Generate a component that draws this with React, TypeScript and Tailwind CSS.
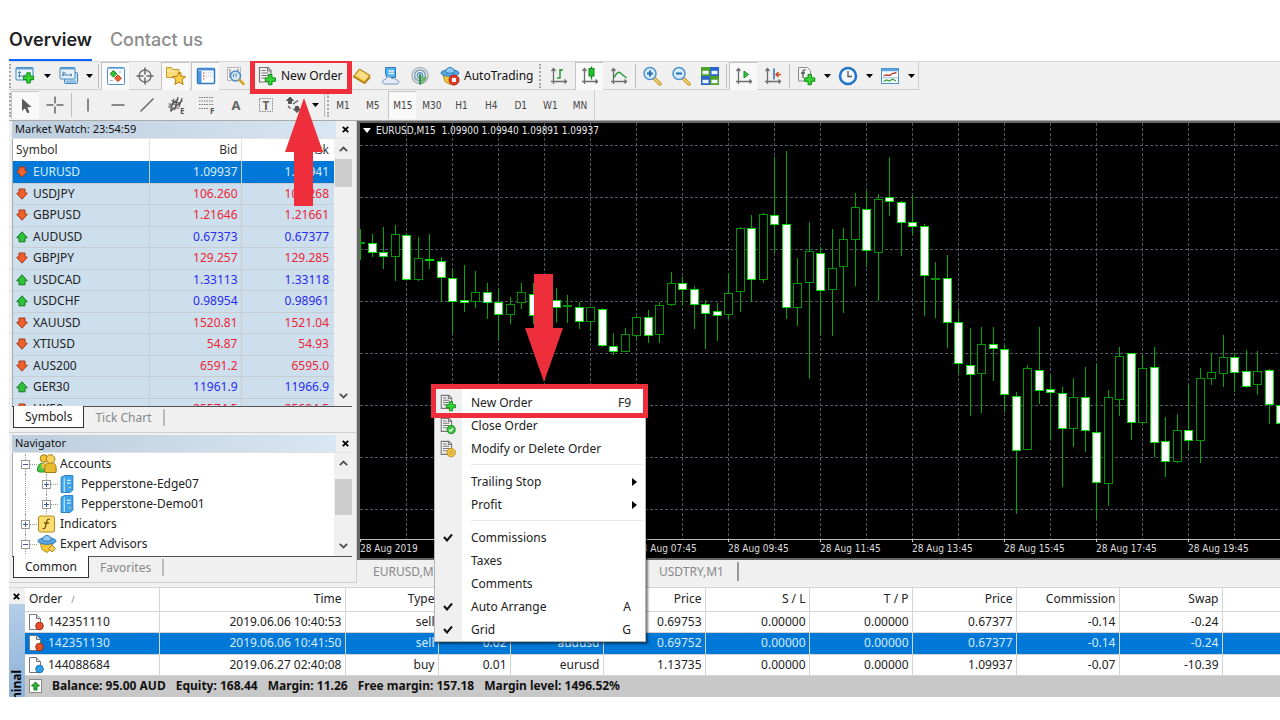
import { useState } from 'react';
import type { ReactNode } from 'react';
import clsx from 'clsx';

const UI = 'font-["Noto_Sans","Open_Sans",sans-serif]';
const TAHOMA = 'font-["DejaVu_Sans_Condensed","Noto_Sans",sans-serif]';

interface Quote {
  symbol: string;
  bid: string;
  ask: string;
  up: boolean;
}

const quotes: Quote[] = [
  { symbol: 'EURUSD', bid: '1.09937', ask: '1.09941', up: false },
  { symbol: 'USDJPY', bid: '106.260', ask: '106.268', up: false },
  { symbol: 'GBPUSD', bid: '1.21646', ask: '1.21661', up: false },
  { symbol: 'AUDUSD', bid: '0.67373', ask: '0.67377', up: true },
  { symbol: 'GBPJPY', bid: '129.257', ask: '129.285', up: false },
  { symbol: 'USDCAD', bid: '1.33113', ask: '1.33118', up: true },
  { symbol: 'USDCHF', bid: '0.98954', ask: '0.98961', up: true },
  { symbol: 'XAUUSD', bid: '1520.81', ask: '1521.04', up: false },
  { symbol: 'XTIUSD', bid: '54.87', ask: '54.93', up: false },
  { symbol: 'AUS200', bid: '6591.2', ask: '6595.0', up: false },
  { symbol: 'GER30', bid: '11961.9', ask: '11966.9', up: true },
  { symbol: 'HK50', bid: '25574.5', ask: '25604.5', up: false },
];

const orders = [
  { id: '142351110', time: '2019.06.06 10:40:53', type: 'sell', size: '', symbol: '', open: '0.69753', price: '0.67377', commission: '-0.14', swap: '-0.24' },
  { id: '142351130', time: '2019.06.06 10:41:50', type: 'sell', size: '0.02', symbol: 'audusd', open: '0.69752', price: '0.67377', commission: '-0.14', swap: '-0.24' },
  { id: '144088684', time: '2019.06.27 02:40:08', type: 'buy', size: '0.01', symbol: 'eurusd', open: '1.13735', price: '1.09937', commission: '-0.07', swap: '-10.39' },
];

const account = ['Balance: 95.00 AUD', 'Equity: 168.44', 'Margin: 11.26', 'Free margin: 157.18', 'Margin level: 1496.52%'];

// high, body top, body bottom, low, filled (1 = bearish)
const candles: number[][] = [
  [229, 242, 243, 260, 0], [234, 243, 253, 257, 1], [227, 252, 257, 269, 1], [225, 234, 257, 281, 0],
  [234, 235, 280, 280, 1], [237, 258, 280, 281, 0], [234, 259, 261, 269, 1], [257, 261, 278, 302, 1],
  [269, 278, 302, 333, 1], [265, 300, 303, 312, 1], [271, 292, 302, 308, 0], [283, 292, 303, 319, 1],
  [289, 302, 315, 340, 1], [297, 304, 315, 324, 0], [283, 292, 303, 309, 0], [283, 294, 316, 324, 1],
  [290, 300, 316, 322, 0], [288, 300, 308, 323, 1], [295, 305, 307, 323, 0], [302, 307, 322, 329, 1],
  [307, 307, 322, 331, 0], [308, 309, 346, 347, 1], [333, 346, 352, 355, 1], [328, 334, 352, 352, 0],
  [316, 317, 336, 339, 0], [310, 317, 336, 343, 1], [302, 305, 335, 343, 0], [272, 283, 305, 306, 0],
  [277, 283, 290, 306, 1], [286, 289, 305, 329, 1], [300, 304, 314, 349, 1], [303, 311, 316, 341, 1],
  [273, 293, 315, 319, 0], [227, 228, 292, 312, 0], [215, 228, 280, 302, 1], [213, 214, 280, 283, 0],
  [157, 215, 225, 253, 1], [151, 224, 308, 319, 1], [258, 283, 308, 326, 0], [222, 251, 283, 379, 0],
  [247, 253, 291, 335, 1], [229, 268, 290, 336, 0], [228, 239, 267, 313, 0], [193, 207, 240, 286, 0],
  [191, 209, 251, 267, 1], [194, 199, 253, 301, 0], [157, 197, 202, 216, 1], [201, 202, 223, 256, 1],
  [196, 222, 227, 235, 1], [224, 226, 276, 316, 1], [262, 278, 279, 318, 0], [255, 278, 323, 348, 1],
  [311, 322, 364, 374, 1], [328, 365, 375, 416, 1], [327, 344, 374, 413, 0], [327, 344, 349, 381, 1],
  [345, 349, 395, 412, 1], [392, 396, 451, 514, 1], [365, 368, 450, 450, 0], [327, 370, 391, 404, 1],
  [375, 389, 393, 440, 1], [387, 393, 429, 487, 1], [378, 397, 429, 447, 0], [367, 397, 431, 452, 1],
  [364, 432, 483, 519, 1], [390, 397, 484, 506, 0], [347, 356, 400, 416, 0], [353, 353, 423, 440, 1],
  [355, 368, 423, 424, 0], [347, 367, 443, 457, 1], [417, 441, 462, 477, 1], [414, 430, 462, 463, 0],
  [385, 430, 441, 451, 1], [368, 378, 441, 463, 0], [353, 372, 379, 385, 0], [335, 357, 374, 387, 0],
  [353, 357, 373, 392, 1], [350, 371, 387, 388, 1], [351, 371, 385, 395, 0], [369, 370, 405, 424, 1],
  [405, 405, 424, 457, 1],
];

const timeLabels = [
  '28 Aug 2019', '28 Aug 03:45', '28 Aug 05:45', '28 Aug 07:45', '28 Aug 09:45', '28 Aug 11:45',
  '28 Aug 13:45', '28 Aug 15:45', '28 Aug 17:45', '28 Aug 19:45', '28 Aug 21:45',
];

const timeframes = ['M1', 'M5', 'M15', 'M30', 'H1', 'H4', 'D1', 'W1', 'MN'];

/* ---------- icons ---------- */

function Svg({ children, size = 20 }: { children: ReactNode; size?: number }) {
  return (
    <svg width={size} height={size} viewBox="0 0 20 20" fill="none" className="shrink-0" aria-hidden="true">
      {children}
    </svg>
  );
}

const Plus = ({ x, y }: { x: number; y: number }) => (
  <path d={`M${x} ${y}h3.4v3.4h3.4v3.4h-3.4v3.4h-3.4v-3.4h-3.4v-3.4h3.4z`} fill="#35d435" stroke="#0b8a14" strokeWidth="1" />
);

const Sheet = () => (
  <>
    <path d="M2.500 1.500h8.500l3 3v11.500h-11.500z" fill="#f2f2f2" stroke="#777" strokeWidth="1.200" />
    <path d="M10.500 1.500v3.500h3.500" stroke="#777" strokeWidth="1.200" />
    <path d="M4.500 4.500h4M4.500 7h7M4.500 9.500h7M4.500 12h4" stroke="#777" strokeWidth="1.200" />
  </>
);

const NewChartIcon = () => (
  <Svg>
    <rect x="1" y="1.500" width="17" height="12.500" rx="1" fill="#eaf4fd" stroke="#3f83bd" />
    <path d="M1 2.500h17" stroke="#5d9fd6" strokeWidth="2" />
    <path d="M4.500 5.500v6M3 7l1.500-1.500 1.500 1.500M3 10h8M9.500 8.500l1.500 1.500" stroke="#4a7fa8" />
    <Plus x={11.800} y={6.800} />
  </Svg>
);

const ProfilesIcon = () => (
  <Svg>
    <rect x="5.500" y="6.500" width="13" height="11" rx="1" fill="#cfe5f8" stroke="#3f83bd" />
    <rect x="1" y="1.500" width="15" height="11.500" rx="1" fill="#eaf4fd" stroke="#3f83bd" />
    <path d="M1 2.500h15" stroke="#5d9fd6" strokeWidth="2" />
    <path d="M4 5.500v5M3 9h10M4 7h3M11.500 7.500l1.500 1.500-1.500 1.500" stroke="#4a7fa8" />
    <path d="M7 15.500h10" stroke="#7fb2dc" strokeWidth="2" />
  </Svg>
);

const MarketIcon = () => (
  <Svg>
    <rect x="1.500" y="1.500" width="17" height="17" rx="1" fill="#fff" stroke="#4b93cf" />
    <path d="M2 2.500h16" stroke="#8abde6" />
    <path d="M7.500 4.500l3.300 3.300-3.300 3.300-3.300-3.300z" fill="#35c435" stroke="#118a1a" />
    <path d="M12 9l3.300 3.300-3.300 3.300-3.300-3.300z" fill="#f0652d" stroke="#b8431a" />
    <path d="M4 14.500h3M13 6h2.500" stroke="#9db7cc" />
  </Svg>
);

const CrosshairIcon = () => (
  <Svg>
    <circle cx="10" cy="10" r="6" stroke="#777" strokeWidth="1.500" />
    <path d="M10 1.500v7M10 11.500v7M1.500 10h7M11.500 10h7" stroke="#666" strokeWidth="1.500" />
  </Svg>
);

const FavoritesIcon = () => (
  <Svg>
    <path d="M0.500 1.500h5l1.500 2h6v3h2v5h-14.500z" fill="#f8dc7c" stroke="#c79c27" />
    <path d="M1 5h8" stroke="#fff1b5" />
    <path d="M13 6l1.900 4.200 4.600.5-3.400 3.100 1 4.700-4.100-2.400-4.100 2.400 1-4.700-3.400-3.100 4.600-.5z" fill="#fbd04a" stroke="#b57d12" />
  </Svg>
);

const PanelIcon = () => (
  <Svg>
    <rect x="1.500" y="2.500" width="17" height="15" rx="1" fill="#fff" stroke="#2f78bd" strokeWidth="1.500" />
    <path d="M2 3.500h16" stroke="#4d94d6" strokeWidth="2" />
    <rect x="2" y="5" width="3.500" height="12" fill="#4c96df" />
    <path d="M7 7h1.500M7 10h1.500M7 13h1.500" stroke="#d03030" />
    <path d="M10 7h7M10 10h7" stroke="#9fc1df" strokeDasharray="1 1" />
  </Svg>
);

const TesterIcon = () => (
  <Svg>
    <rect x="2.500" y="1.500" width="13" height="13" fill="#f4f4f4" stroke="#9a9a9a" strokeDasharray="2 1" />
    <path d="M5 3v9M13 3v5" stroke="#777" />
    <circle cx="10.500" cy="10" r="5" fill="#cfe5f9" fillOpacity=".9" stroke="#4c8cc7" strokeWidth="1.500" />
    <path d="M8.500 8v3M11 7v4" stroke="#5c86ab" />
    <path d="M14.500 14l4 4" stroke="#d9a327" strokeWidth="2.500" strokeLinecap="round" />
  </Svg>
);

const NewOrderIcon = ({ size = 20 }: { size?: number }) => (
  <Svg size={size}>
    <Sheet />
    <Plus x={11.600} y={8.500} />
  </Svg>
);

const CloseOrderIcon = () => (
  <Svg size={18}>
    <Sheet />
    <circle cx="13.500" cy="14" r="4.500" fill="#35c435" stroke="#118a1a" />
    <path d="M11.500 14l1.500 1.800 2.600-3.300" stroke="#fff" strokeWidth="1.500" />
  </Svg>
);

const ModifyOrderIcon = () => (
  <Svg size={18}>
    <Sheet />
    <circle cx="13.500" cy="14" r="4.700" fill="#f3c63f" stroke="#b3871a" />
    <circle cx="13.500" cy="14" r="1.500" fill="#fbe796" stroke="#b3871a" />
  </Svg>
);

const GoldIcon = () => (
  <Svg>
    <path d="M1.500 10.500l6-7.500 10.500 6.500-5.500 7.500z" fill="#f5c945" stroke="#a8750f" />
    <path d="M8 4.500l8.500 5.500-4 4.500-8.500-5.500z" fill="#fbe08a" />
    <path d="M1.500 10.500l11 6.500 5.500-6" stroke="#b98417" strokeWidth="2" />
  </Svg>
);

const CommunityIcon = () => (
  <Svg>
    <path d="M4.500 1.500h10v10h-8.500l-1.500-3z" fill="#55b2ef" stroke="#2a7ab9" />
    <path d="M7.500 5h5.500M7.500 7.500h5.500" stroke="#e4f4ff" strokeWidth="1.500" />
    <path d="M4 18c-3.500-.5-3-5 .5-4.500.5-3.500 5.500-3.500 6.500-.5 2-1.500 4 0 4 1 4 0 3.500 4 1 4z" fill="#e3ecf6" stroke="#7897b6" />
  </Svg>
);

const SignalIcon = () => (
  <Svg>
    <circle cx="10" cy="9.500" r="8" stroke="#a9b4bd" strokeWidth="1.500" />
    <circle cx="10" cy="9.500" r="5.500" stroke="#7e9bb3" strokeWidth="1.500" />
    <circle cx="10" cy="9.500" r="3" fill="#bcd9f3" stroke="#3d7fc0" />
    <path d="M10 9.500v9c4-.5 6.500-4 7-7.500" fill="#5bb45b" fillOpacity=".7" />
    <path d="M10 8v10.500" stroke="#3d9440" strokeWidth="2" />
  </Svg>
);

const AdvisorIcon = ({ stop = false }: { stop?: boolean }) => (
  <Svg>
    <path d="M3 8.500h13l-2 6.500-4 3.500-5-3z" fill="#f7c83c" stroke="#b98a1b" />
    <ellipse cx="10" cy="7" rx="9" ry="3.300" fill="#58a8e4" stroke="#2e78b8" />
    <path d="M5.500 6c0-6 9-6 9 0 0 1.500-9 1.500-9 0z" fill="#8ccaf5" stroke="#2e78b8" />
    {stop ? (
      <>
        <circle cx="14" cy="14" r="5" fill="#e23b28" stroke="#a82414" />
        <rect x="12" y="12" width="4" height="4" fill="#fff" />
      </>
    ) : (
      <path d="M15 11l3.500 3.500-3.500 3.500-3.500-3.500z" fill="#f5cf55" stroke="#b98a1b" />
    )}
  </Svg>
);

const Axes = () => <path d="M4.500 3v15M2 15.500h15.500M2.500 5l2-2.500 2 2.500M15.500 13.500l2 2-2 2" stroke="#6c6c6c" strokeWidth="1.300" />;

const BarChartIcon = () => (
  <Svg>
    <Axes />
    <path d="M11 3v9.500M8 12h3M11 4h3" stroke="#2c9738" strokeWidth="1.500" />
  </Svg>
);

const CandleChartIcon = () => (
  <Svg>
    <Axes />
    <path d="M11.500 0.500v13" stroke="#16851f" strokeWidth="1.300" />
    <rect x="9" y="2.500" width="5" height="7.500" fill="#1fc02b" stroke="#16851f" />
  </Svg>
);

const LineChartIcon = () => (
  <Svg>
    <Axes />
    <path d="M5 11.500c3-6 6-6 7-4l5.500 4.500" stroke="#2c9738" strokeWidth="1.500" />
  </Svg>
);

const ZoomIcon = ({ minus = false }: { minus?: boolean }) => (
  <Svg>
    <path d="M12.500 12.500l5.500 5.500" stroke="#c9952a" strokeWidth="3.500" strokeLinecap="round" />
    <path d="M12.500 12.500l5.500 5.500" stroke="#f7d774" strokeWidth="1.500" strokeLinecap="round" />
    <circle cx="8" cy="7.500" r="6" fill="#d6ebfb" stroke="#4f91cd" strokeWidth="1.500" />
    <path d={minus ? 'M5 7.500h6' : 'M5 7.500h6M8 4.500v6'} stroke="#2770b0" strokeWidth="2" />
  </Svg>
);

const TilesIcon = () => (
  <Svg>
    <rect x="1" y="1" width="9" height="9" fill="#4ca22b" />
    <rect x="10" y="1" width="9" height="9" fill="#2a62c9" />
    <rect x="1" y="10" width="9" height="9" fill="#2a62c9" />
    <rect x="10" y="10" width="9" height="9" fill="#4ca22b" />
    <path d="M2.500 6.500h6M11.500 6.500h6M2.500 15.500h6M11.500 15.500h6" stroke="#eef6ff" strokeWidth="3.500" />
  </Svg>
);

const AutoScrollIcon = () => (
  <Svg>
    <Axes />
    <path d="M10 5l4.500 3.500-4.500 3.500z" fill="#3cc445" stroke="#16851f" />
  </Svg>
);

const ShiftIcon = () => (
  <Svg>
    <Axes />
    <path d="M11 2.500v11" stroke="#2f6fb0" strokeWidth="1.500" />
    <path d="M18 8.500h-5M15.500 6l-2.500 2.500 2.500 2.500" stroke="#cf4a22" strokeWidth="1.500" />
  </Svg>
);

const IndicatorsIcon = () => (
  <Svg>
    <path d="M2.500 1.500h9l3 3v10.500h-12z" fill="#f2f2f2" stroke="#8c8c8c" />
    <path d="M9.500 4c-2-.5-2.500.5-2.500 2v6M5 7h4" stroke="#555" strokeWidth="1.300" />
    <Plus x={12} y={8.500} />
  </Svg>
);

const ClockIcon = () => (
  <Svg>
    <circle cx="10" cy="10" r="8" fill="#f3f7fb" stroke="#1f74c4" strokeWidth="2.500" />
    <path d="M10 5v5.500h4" stroke="#555" strokeWidth="1.300" />
  </Svg>
);

const TemplateIcon = () => (
  <Svg>
    <rect x="1.500" y="2.500" width="17" height="15" fill="#fff" stroke="#4b8fcb" />
    <path d="M2 4h16" stroke="#5da4e0" strokeWidth="2.500" />
    <path d="M3.500 10l3-1 3 .5 3-2 4-1" stroke="#b3372b" strokeWidth="1.300" />
    <path d="M3.500 15.500l3-1.500 3 1 3-2 3.500 2" stroke="#37a03f" strokeWidth="1.300" />
    <path d="M2 11.800h16" stroke="#9dbfdd" />
  </Svg>
);

const CursorIcon = () => (
  <Svg>
    <path d="M6 2.500v12.500l3-2.800 2.200 5 2.300-1-2.200-4.900 4.200-.3z" fill="#5b5b5b" />
  </Svg>
);

const strokeIcon = (d: string) => (
  <Svg>
    <path d={d} stroke="#666" strokeWidth="1.500" />
  </Svg>
);

const ChannelIcon = () => (
  <Svg>
    <path d="M1.500 12.500l10-9M3.500 16.500l12-11M1.500 9l11 .5M4.500 5.500l9 3M3 13h9M7 4l-3.500 12M11 2l-3.500 13M15 3l-3 9" stroke="#5c5c5c" strokeWidth="1.200" />
    <text x="13" y="19" fontSize="8" fontWeight="700" fill="#555">E</text>
  </Svg>
);

const FiboIcon = () => (
  <Svg>
    <path d="M2 2.500h15M2 6h15M2 9.500h15M2 13.500h9" stroke="#777" strokeDasharray="1.500 1" strokeWidth="1.200" />
    <text x="13" y="19" fontSize="8" fontWeight="700" fill="#555">F</text>
  </Svg>
);

const TextIcon = () => (
  <Svg>
    <text x="10" y="15" textAnchor="middle" fontSize="13" fontWeight="700" fill="#666">A</text>
  </Svg>
);

const LabelIcon = () => (
  <Svg>
    <rect x="3.500" y="3.500" width="13" height="13" stroke="#888" strokeDasharray="1.500 1" />
    <text x="10" y="15" textAnchor="middle" fontSize="12" fontWeight="700" fill="#666">T</text>
  </Svg>
);

const ShapesIcon = () => (
  <Svg>
    <path d="M6 2l3.500 3.500h-2v3h-3v-3h-2zM13 17.500l-3.500-3.500h2v-2.500h3v2.500h2z" fill="#555" stroke="#555" />
    <path d="M4 11l2.500 2.500M9 9l5-3.500" stroke="#666" strokeWidth="1.500" />
  </Svg>
);

const Trend = ({ up }: { up: boolean }) => (
  <svg width="12" height="12" viewBox="0 0 12 12" className="shrink-0" aria-hidden="true">
    {up ? (
      <path d="M6 .8l5.300 6h-2.300v4h-6v-4h-2.300z" fill="#2fc13a" stroke="#187a20" />
    ) : (
      <path d="M6 11.200l5.300-5.800-2.300-.8v-3.600h-6v3.600l-2.300.8z" fill="#f0602e" stroke="#a63c18" />
    )}
  </svg>
);

const OrderIcon = ({ buy }: { buy: boolean }) => (
  <svg width="16" height="18" viewBox="0 0 16 18" className="shrink-0" aria-hidden="true">
    <path d="M1.500 1.500h7l4 4v11h-11z" fill="#fff" stroke="#777" />
    <path d="M8.500 1.500v4h4" fill="#ddd" stroke="#777" />
    <circle cx="11.500" cy="13" r="3.800" fill={buy ? '#2f9fe8' : '#e2502a'} stroke={buy ? '#1a6fae' : '#a3320f'} />
  </svg>
);

const AccountsIcon = () => (
  <Svg>
    <path d="M.500 17c0-7 3-9 7-7v8h-5z" fill="#4cc94c" stroke="#208a28" />
    <circle cx="7" cy="4.500" r="3.800" fill="#f0c33c" stroke="#a87c12" />
    <path d="M4.500 9.500h5v5h-5z" fill="#f0c33c" />
    <path d="M8 18.500c-1.500-8 1.500-10 5.500-10s6.500 2 5.500 10z" fill="#e9b92f" stroke="#a87c12" />
    <circle cx="13.500" cy="5" r="4.300" fill="#f7d35c" stroke="#a87c12" />
  </Svg>
);

const ServerIcon = () => (
  <Svg size={18}>
    <path d="M3.500 2.500l4-2h9v16l-3 3h-10z" fill="#3da5ee" stroke="#1d73b4" />
    <path d="M7 3v16" stroke="#b8e0fb" strokeWidth="1.500" />
    <path d="M10 6h4M10 9h4" stroke="#d9f0ff" strokeWidth="1.500" />
    <path d="M12 14h2" stroke="#f7d35c" strokeWidth="1.500" />
  </Svg>
);

const FunctionIcon = () => (
  <Svg>
    <rect x="1.500" y="2" width="16" height="16" rx="2" fill="#fbdd72" stroke="#b58a1c" />
    <path d="M13 5.500c-2.500-1-3 .5-3.500 3l-1 4c-.4 2-1.500 2.500-3 2M7 9h5" stroke="#7a5a08" strokeWidth="1.300" />
  </Svg>
);

/* ---------- small controls ---------- */

function ToolButton({ label, pressed, children }: { label: string; pressed?: boolean; children: ReactNode }) {
  return (
    <button
      type="button"
      aria-label={label}
      className={clsx(
        'flex h-7 w-7 shrink-0 items-center justify-center',
        pressed && 'border-t border-l border-[#c4c4c4] bg-[#f9f9f9]',
      )}
    >
      {children}
    </button>
  );
}

function Caret({ className = 'w-3.5' }: { className?: string }) {
  return (
    <button type="button" aria-label="More" className={clsx('flex h-7 shrink-0 items-center justify-center', className)}>
      <svg width="7" height="4" viewBox="0 0 7 4" aria-hidden="true"><path d="M0 0h7l-3.500 4z" fill="#000" /></svg>
    </button>
  );
}

const Divider = () => <span className="mx-0.5 h-6 w-px shrink-0 bg-[#bdbdbd]" />;
const Grip = () => <span className="h-6 w-0 shrink-0 border-l-2 border-dotted border-[#a8a8a8]" />;

const CloseButton = () => (
  <button type="button" aria-label="Close" className="flex h-4 w-3.5 items-center justify-center">
    <svg width="7" height="7" viewBox="0 0 7 7" aria-hidden="true"><path d="M.800.800l5.400 5.400M6.200.800l-5.400 5.400" stroke="#000" strokeWidth="1.800" /></svg>
  </button>
);

const Chevron = ({ down = false }: { down?: boolean }) => (
  <svg width="9" height="6" viewBox="0 0 9 6" fill="none" aria-hidden="true">
    <path d={down ? 'M.8.8l3.700 3.700 3.700-3.700' : 'M.8 5.200l3.700-3.700 3.700 3.700'} stroke="#505050" strokeWidth="1.800" />
  </svg>
);

function ScrollBar({ thumb }: { thumb: string }) {
  return (
    <div className="flex w-[18px] shrink-0 flex-col items-center bg-[#f0f0f0]">
      <button type="button" aria-label="Scroll up" className="flex h-5 w-full items-center justify-center"><Chevron /></button>
      <div className={clsx('w-[17px] bg-[#cdcdcd]', thumb)} />
      <div className="flex-1" />
      <button type="button" aria-label="Scroll down" className="flex h-5 w-full items-center justify-center"><Chevron down /></button>
    </div>
  );
}

function PanelTitle({ children }: { children: ReactNode }) {
  return (
    <div className="flex h-[18px] items-center border-b border-[#e4e4e4]">
      <h2 className="h-full flex-1 bg-linear-to-r from-[#bccddd] to-[#d9e6f3] pl-[3px] text-[11px] leading-4 text-[#111]">{children}</h2>
      <div className="flex w-4 justify-end"><CloseButton /></div>
    </div>
  );
}

function PanelTabs({ tabs }: { tabs: [string, string] }) {
  return (
    <div className="flex h-[22px] border-t border-[#555] text-xs">
      <button type="button" className="-mt-px ml-px border border-t-0 border-[#333] bg-white px-[11px] text-[#222]">{tabs[0]}</button>
      <button type="button" className="my-0.5 border-r-2 border-[#bbb] px-[11px] text-[#888]">{tabs[1]}</button>
    </div>
  );
}

/* ---------- toolbars ---------- */

function Toolbars() {
  const [frame, setFrame] = useState('M15');
  return (
    <div className="border-t border-[#d6d6d6] bg-[#f0f0f0]">
      <div className="flex h-7 w-fit items-center border-r border-b border-[#cfcfcf]">
        <Grip />
        <div className="flex w-[85px] shrink-0 items-center">
          <ToolButton label="New chart"><NewChartIcon /></ToolButton>
          <Caret className="w-4" />
          <ToolButton label="Profiles"><ProfilesIcon /></ToolButton>
          <Caret className="w-3" />
        </div>
        <Divider />
        <div className="flex w-[148px] shrink-0 justify-between">
          <ToolButton label="Market Watch" pressed><MarketIcon /></ToolButton>
          <ToolButton label="Data Window"><CrosshairIcon /></ToolButton>
          <ToolButton label="Navigator" pressed><FavoritesIcon /></ToolButton>
          <ToolButton label="Terminal" pressed><PanelIcon /></ToolButton>
          <ToolButton label="Strategy Tester"><TesterIcon /></ToolButton>
        </div>
        <button type="button" className="relative ml-px flex h-7 w-[98px] shrink-0 items-center gap-1 pl-[7px] text-xs text-[#111]">
          <NewOrderIcon />
          <span className="whitespace-nowrap">New Order</span>
          <span className="absolute -top-px -right-1 -bottom-1 left-0 border-[5px] border-t-2 border-[#ee2e3b]" />
        </button>
        <div className="flex w-[86px] shrink-0 justify-between">
          <ToolButton label="MetaEditor"><GoldIcon /></ToolButton>
          <ToolButton label="Community"><CommunityIcon /></ToolButton>
          <ToolButton label="Signals"><SignalIcon /></ToolButton>
        </div>
        <button type="button" className="flex h-7 w-[105px] shrink-0 items-center gap-1 pl-1.5 text-xs text-[#111]">
          <AdvisorIcon stop />
          <span>AutoTrading</span>
        </button>
        <Grip />
        <div className="ml-1 flex w-[88px] shrink-0 justify-between">
          <ToolButton label="Bar chart"><BarChartIcon /></ToolButton>
          <ToolButton label="Candlesticks" pressed><CandleChartIcon /></ToolButton>
          <ToolButton label="Line chart"><LineChartIcon /></ToolButton>
        </div>
        <Divider />
        <div className="flex w-[86px] shrink-0 justify-between">
          <ToolButton label="Zoom in"><ZoomIcon /></ToolButton>
          <ToolButton label="Zoom out"><ZoomIcon minus /></ToolButton>
          <ToolButton label="Tile windows"><TilesIcon /></ToolButton>
        </div>
        <Divider />
        <div className="flex w-[58px] shrink-0 justify-between">
          <ToolButton label="Auto scroll" pressed><AutoScrollIcon /></ToolButton>
          <ToolButton label="Chart shift"><ShiftIcon /></ToolButton>
        </div>
        <Divider />
        <ToolButton label="Indicators"><IndicatorsIcon /></ToolButton>
        <Caret />
        <ToolButton label="Periods"><ClockIcon /></ToolButton>
        <Caret />
        <ToolButton label="Templates"><TemplateIcon /></ToolButton>
        <Caret />
      </div>
      <div className="flex h-[30px] w-fit items-center border-r border-[#cfcfcf]">
        <Grip />
        <div className="flex w-[58px] shrink-0 justify-between">
          <ToolButton label="Cursor" pressed><CursorIcon /></ToolButton>
          <ToolButton label="Crosshair">{strokeIcon('M10 1.500v7M10 11.500v7M1.500 10h7M11.500 10h7')}</ToolButton>
        </div>
        <Divider />
        <div className="flex w-[206px] shrink-0 justify-between">
          <ToolButton label="Vertical line">{strokeIcon('M10 3.500v13')}</ToolButton>
          <ToolButton label="Horizontal line">{strokeIcon('M3.500 10h13')}</ToolButton>
          <ToolButton label="Trendline">{strokeIcon('M3.500 16.500l13-13')}</ToolButton>
          <ToolButton label="Equidistant channel"><ChannelIcon /></ToolButton>
          <ToolButton label="Fibonacci retracement"><FiboIcon /></ToolButton>
          <ToolButton label="Text"><TextIcon /></ToolButton>
          <ToolButton label="Text label"><LabelIcon /></ToolButton>
        </div>
        <ToolButton label="Arrows"><ShapesIcon /></ToolButton>
        <Caret />
        <Divider />
        <Grip />
        <div className={clsx('flex w-[265px] shrink-0 justify-between text-[10px] text-[#444]', TAHOMA)}>
          {timeframes.map((t) => (
            <button
              key={t}
              type="button"
              onClick={() => setFrame(t)}
              className={clsx('h-7 w-7', t === frame && 'border-t border-l border-[#c4c4c4] bg-[#f9f9f9]')}
            >
              {t}
            </button>
          ))}
        </div>
      </div>
    </div>
  );
}

/* ---------- left side ---------- */

function MarketWatch() {
  return (
    <section className="border-b border-[#cfcfcf] pr-1 pb-1 pl-[3px]">
      <PanelTitle>Market Watch: 23:54:59</PanelTitle>
      <div className="flex h-[267px] overflow-hidden border-l border-[#aaa]">
        <div className="flex-1">
          <table className="w-full table-fixed text-xs">
            <colgroup>
              <col className="w-[136px]" />
              <col className="w-[92px]" />
              <col />
            </colgroup>
            <thead className="bg-white text-[#333]">
              <tr className="h-[22px]">
                <th className="border-r border-[#e2e2e2] p-0 pl-[3px] text-left font-normal">Symbol</th>
                <th className="border-r border-[#e2e2e2] p-0 pr-[3px] text-right font-normal">Bid</th>
                <th className="p-0 pr-[5px] text-right font-normal">Ask</th>
              </tr>
            </thead>
            <tbody>
              {quotes.map((q, i) => (
                <tr
                  key={q.symbol}
                  className={clsx(
                    'border-b border-[#c9cdd2] leading-5 odd:h-[22px] even:h-[21px]',
                    i === 0 ? 'bg-[#0078d7] text-[#d9ecff]' : 'bg-[#cddeec]',
                    i > 0 && (q.up ? 'text-[#2a2af0]' : 'text-[#ee2535]'),
                  )}
                >
                  <td className="border-r border-[#c9cdd2] p-0">
                    <span className={clsx('flex items-center gap-[5px] pl-[3px]', i > 0 && 'text-[#222]')}>
                      <Trend up={q.up} />
                      {q.symbol}
                    </span>
                  </td>
                  <td className="border-r border-[#c9cdd2] p-0 pr-[3px] text-right">{q.bid}</td>
                  <td className="p-0 pr-[5px] text-right">{q.ask}</td>
                </tr>
              ))}
            </tbody>
          </table>
        </div>
        <ScrollBar thumb="h-[28px]" />
      </div>
      <PanelTabs tabs={['Symbols', 'Tick Chart']} />
    </section>
  );
}

function Expander({ open }: { open?: boolean }) {
  return (
    <svg width="9" height="9" viewBox="0 0 9 9" className="relative shrink-0" aria-hidden="true">
      <rect x=".5" y=".5" width="8" height="8" fill="#fff" stroke="#999" />
      <path d={open ? 'M2 4.500h5' : 'M2 4.500h5M4.500 2v5'} stroke="#3c5a9a" />
    </svg>
  );
}

function TreeRow({ label, icon, open, child }: { label: string; icon: ReactNode; open?: boolean; child?: boolean }) {
  return (
    <li className={clsx('relative flex h-5 items-center', child ? 'pl-[29px]' : 'pl-2')}>
      <span className="absolute inset-y-0 left-3 border-l border-dotted border-[#999]" />
      {child && <span className="absolute inset-y-0 left-[33px] border-l border-dotted border-[#999]" />}
      <Expander open={open} />
      <span className="w-[7px] border-t border-dotted border-[#999]" />
      {icon}
      <span className={clsx('text-xs text-[#222]', child ? 'pl-[5px]' : 'pl-[3px]')}>{label}</span>
    </li>
  );
}

function Navigator() {
  return (
    <section className="border-b border-[#cfcfcf] pt-0.5 pr-1 pb-1 pl-[3px]">
      <PanelTitle>Navigator</PanelTitle>
      <div className="flex h-[103px] overflow-hidden border-l border-[#aaa]">
        <ul className="flex-1 bg-white pt-px">
          <TreeRow label="Accounts" icon={<AccountsIcon />} open />
          <TreeRow label="Pepperstone-Edge07" icon={<ServerIcon />} child />
          <TreeRow label="Pepperstone-Demo01" icon={<ServerIcon />} child />
          <TreeRow label="Indicators" icon={<FunctionIcon />} />
          <TreeRow label="Expert Advisors" icon={<AdvisorIcon />} open />
        </ul>
        <div className="flex"><ScrollBar thumb="mt-1.5 h-9" /></div>
      </div>
      <PanelTabs tabs={['Common', 'Favorites']} />
    </section>
  );
}

/* ---------- chart ---------- */

function Chart() {
  const columns = Array.from({ length: 40 }, (_, i) => 406 + i * 46);
  const rows = Array.from({ length: 8 }, (_, i) => 145 + i * 52);
  return (
    <section className="flex min-w-0 flex-1 flex-col">
      <div className="relative overflow-hidden border-t-2 border-b-2 border-l-[3px] border-[#666] bg-black">
        <svg className="block h-[419px] w-full" aria-label="EURUSD M15 candles">
          <g transform="translate(-360 -123)">
            <g stroke="#4d5864" strokeDasharray="3 2">
              {columns.map((x) => <path key={x} d={`M${x}.5 123v416`} />)}
              {rows.map((y) => <path key={y} d={`M360 ${y}.5h2000`} />)}
            </g>
            {candles.map(([high, top, bottom, low, filled], i) => {
              const x = Math.floor(360.8 + i * 11.5);
              return (
                <g key={i} stroke="#00a800">
                  <path d={`M${x}.5 ${high}V${low}`} />
                  <rect
                    x={x - 3.5}
                    y={top + 0.5}
                    width="8"
                    height={Math.max(bottom - top - 1, 1)}
                    fill={filled ? '#fff' : '#000'}
                    stroke={filled ? '#00e000' : '#009600'}
                  />
                </g>
              );
            })}
            <path d="M360 539.500h2000" stroke="#bbb" />
            {timeLabels.map((t, i) => <path key={t} d={`M${360 + i * 92}.5 539v3`} stroke="#ccc" />)}
          </g>
        </svg>
        <div className={clsx('flex h-4 text-[10px] leading-[14px] text-[#ddd]', TAHOMA)}>
          {timeLabels.map((t) => <span key={t} className="w-[92px] shrink-0 whitespace-nowrap">{t}</span>)}
        </div>
        <div className={clsx('absolute top-0 left-0 flex items-center gap-[5px] pl-[3px] text-[10px] leading-[15px] text-[#e8e8e8]', TAHOMA)}>
          <svg width="8" height="5" viewBox="0 0 8 5" aria-hidden="true"><path d="M0 0h8l-4 5z" fill="#fff" /></svg>
          <span className="whitespace-pre">EURUSD,M15  1.09900 1.09940 1.09891 1.09937</span>
        </div>
      </div>
      <div className="flex h-[22px] pt-px text-xs text-[#888]">
        <button type="button" className="my-px w-[289px] border-r-2 border-[#bbb] pl-4 text-left">EURUSD,M15</button>
        <button type="button" className="my-px border-r-2 border-[#999] px-[13px]">USDTRY,M1</button>
      </div>
    </section>
  );
}

/* ---------- terminal ---------- */

function Terminal() {
  const cell = 'border-r border-[#d4d4d4] p-0 pr-[3px] text-right font-normal';
  return (
    <section className="flex border-t border-[#d6d6d6] bg-[#f0f0f0]">
      <div className="flex w-4 shrink-0 flex-col">
        <CloseButton />
        <div className="flex flex-1 items-end justify-center bg-linear-to-b from-[#b4cde8] to-[#8fb2d8]">
          <h2 className="h-[27px] overflow-hidden text-xs leading-4 font-bold">
            <span className="block rotate-180 [writing-mode:vertical-rl]">Terminal</span>
          </h2>
        </div>
      </div>
      <div className="min-w-0 flex-1">
        <table className="w-full table-fixed text-xs text-[#222]">
          <colgroup>
            <col className="w-[134px]" />
            <col className="w-[186px]" />
            <col className="w-[93px]" />
            <col className="w-[72px]" />
            <col className="w-[93px]" />
            <col className="w-[102px]" />
            <col className="w-[104px]" />
            <col className="w-[103px]" />
            <col className="w-[104px]" />
            <col className="w-[103px]" />
            <col className="w-[103px]" />
            <col />
          </colgroup>
          <thead className="bg-white">
            <tr className="h-[23px] border-b border-[#d4d4d4]">
              <th className="border-r border-[#d4d4d4] p-0 pl-1 text-left font-normal">
                Order <span className="pl-1.5 text-[9px] text-[#888]">/</span>
              </th>
              {['Time', 'Type', '', '', 'Price', 'S / L', 'T / P', 'Price', 'Commission', 'Swap'].map((h, i) => (
                <th key={i} className={cell}>{h}</th>
              ))}
              <th className="p-0" />
            </tr>
          </thead>
          <tbody>
            {orders.map((o, i) => (
              <tr
                key={o.id}
                className={clsx('border-b border-[#d4d4d4] leading-5 odd:h-[21px] even:h-[22px]', i === 1 ? 'bg-[#0078d7] text-[#d9ecff]' : 'bg-white')}
              >
                <td className="border-r border-[#d4d4d4] p-0">
                  <span className="flex items-center gap-1 pl-[3px]"><OrderIcon buy={o.type === 'buy'} />{o.id}</span>
                </td>
                {[o.time, o.type, o.size, o.symbol, o.open, '0.00000', '0.00000', o.price, o.commission, o.swap].map((v, k) => (
                  <td key={k} className={cell}>{v}</td>
                ))}
                <td className="p-0" />
              </tr>
            ))}
          </tbody>
        </table>
        <div className="flex h-[21px] items-center gap-2.5 bg-[#c8c8c8] pl-1 text-xs font-bold whitespace-nowrap text-[#111]">
          <svg width="13" height="14" viewBox="0 0 13 14" className="shrink-0" aria-hidden="true">
            <rect x=".5" y=".5" width="12" height="13" fill="#fff" stroke="#888" />
            <path d="M6.500 3l4 4h-2.500v4h-3v-4h-2.500z" fill="#2fb53a" stroke="#187a20" />
          </svg>
          {account.map((a) => <span key={a}>{a}</span>)}
        </div>
      </div>
    </section>
  );
}

/* ---------- context menu ---------- */

function MenuItem({ label, hint, icon, checked, sub }: { label: string; hint?: string; icon?: ReactNode; checked?: boolean; sub?: boolean }) {
  return (
    <button type="button" className="flex h-[23px] w-full items-center text-left text-xs text-[#222]">
      <span className="flex w-[26px] shrink-0 justify-center">
        {icon}
        {checked && (
          <svg width="10" height="9" viewBox="0 0 10 9" fill="none" aria-hidden="true"><path d="M1 4l3 3.500 5-6" stroke="#111" strokeWidth="2" /></svg>
        )}
      </span>
      <span className="flex-1 pl-[10px] whitespace-nowrap">{label}</span>
      {hint && <span className="pr-3.5">{hint}</span>}
      {sub && (
        <svg width="5" height="8" viewBox="0 0 5 8" className="mr-2" aria-hidden="true"><path d="M0 0l5 4-5 4z" fill="#000" /></svg>
      )}
    </button>
  );
}

const MenuSeparator = () => <div className="mr-0.5 ml-9 h-2.5 pt-1"><div className="h-px bg-[#e6e6e6]" /></div>;

function ContextMenu() {
  return (
    <div className="absolute top-[387px] left-[434px] z-10 w-[212px] border border-[#b5b5b5] bg-linear-to-r from-[#f0f0f0] from-[27px] to-white to-[27px] pt-[3px] shadow-[2px_2px_2px_rgba(0,0,0,0.5)]">
      <MenuItem label="New Order" hint="F9" icon={<NewOrderIcon size={18} />} />
      <MenuItem label="Close Order" icon={<CloseOrderIcon />} />
      <MenuItem label="Modify or Delete Order" icon={<ModifyOrderIcon />} />
      <MenuSeparator />
      <MenuItem label="Trailing Stop" sub />
      <MenuItem label="Profit" sub />
      <MenuSeparator />
      <MenuItem label="Commissions" checked />
      <MenuItem label="Taxes" />
      <MenuItem label="Comments" />
      <MenuItem label="Auto Arrange" hint="A" checked />
      <MenuItem label="Grid" hint="G" checked />
      <span className="absolute -top-1 -right-[3px] -left-1 h-[34px] border-[5px] border-[#ee2e3b]" />
    </div>
  );
}

export default function App() {
  return (
    <div className={clsx('relative min-h-screen overflow-hidden bg-white pl-[9px]', UI)}>
      <nav className='flex h-[61px] items-end gap-[18px] font-["Inter",sans-serif] text-lg leading-7 font-semibold'>
        <a href="#overview" className="border-b-2 border-[#0a66ff] pb-[5px] text-[#222]">Overview</a>
        <a href="#contact" className="pb-[7px] font-medium text-[#8c8c8c]">Contact us</a>
      </nav>
      <Toolbars />
      <main className="flex border-t border-[#aaa] bg-[#f0f0f0]">
        <aside className="w-[348px] shrink-0 border-r border-[#cfcfcf]">
          <MarketWatch />
          <Navigator />
        </aside>
        <Chart />
      </main>
      <div className="h-1 bg-[#f0f0f0]" />
      <Terminal />

      <ContextMenu />
      <svg width="38" height="108" viewBox="0 0 38 108" className="absolute top-[98px] left-[285px]" aria-hidden="true">
        <path d="M19 0l19 54h-10v54h-19v-54h-9z" fill="#ee2e3b" />
      </svg>
      <svg width="38" height="108" viewBox="0 0 38 108" className="absolute top-[274px] left-[525px] z-10" aria-hidden="true">
        <path d="M9 0h19v54h10l-19 54-19-54h9z" fill="#ee2e3b" />
      </svg>
    </div>
  );
}
